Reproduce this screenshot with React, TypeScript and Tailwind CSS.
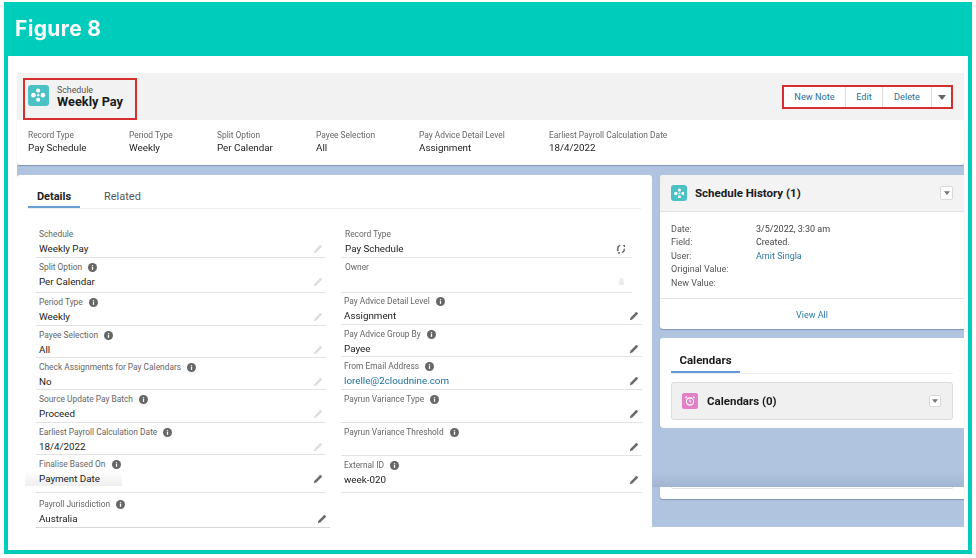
import React from "react";

const font = "font-['Roboto','Liberation_Sans',sans-serif]";

function Pencil({ tone = "dark" }: { tone?: "dark" | "light" }) {
  return (
    <svg viewBox="0 0 12 12" className="w-[10px] h-[10px] shrink-0">
      <path d="M1 11l.7-3L8.3 1.4a.8.8 0 0 1 1.1 0l1.2 1.2a.8.8 0 0 1 0 1.1L4 10.3z" fill={tone === "dark" ? "#6a6a6a" : "#dedede"} />
    </svg>
  );
}

function Info() {
  return (
    <svg viewBox="0 0 10 10" className="w-[9px] h-[9px] shrink-0">
      <circle cx="5" cy="5" r="5" fill="#666" />
      <rect x="4.3" y="4.2" width="1.4" height="3.4" fill="#fff" />
      <rect x="4.3" y="2.4" width="1.4" height="1.2" fill="#fff" />
    </svg>
  );
}

function Swap() {
  return (
    <svg viewBox="0 0 10 10" className="w-[10px] h-[10px] shrink-0" fill="none" stroke="#555" strokeWidth="1.3">
      <path d="M4.2 1.6C2.4 1.8 1.6 3.2 1.8 5.4" />
      <path d="M8.2 4.6c.2 2.2-.6 3.6-2.4 3.8" />
      <path d="M.4 5.6h2.8L1.8 7.6zM6.8.9l2.4.2-.6 2.4z" fill="#555" stroke="none" />
      <path d="M2 8.2h2v1.3H2zM6.4 1h1.4" stroke="none" fill="#555" />
    </svg>
  );
}

function Lock() {
  return (
    <svg viewBox="0 0 10 10" className="w-[9px] h-[9px] shrink-0">
      <path d="M3 5V3a2 2 0 0 1 4 0v2h1v4H2V5z" fill="#ececec" />
    </svg>
  );
}

function Flower({ className }: { className: string }) {
  return (
    <div className={`${className} rounded-[3px] bg-[#4bc1c5] flex items-center justify-center`}>
      <svg viewBox="0 0 12 12" className="w-[68%] h-[68%]" fill="#fff">
        <circle cx="6" cy="2.2" r="1.7" />
        <circle cx="6" cy="9.8" r="1.7" />
        <circle cx="2" cy="6" r="1.9" />
        <circle cx="10" cy="6" r="1.9" />
        <circle cx="6" cy="6" r="1" />
      </svg>
    </div>
  );
}

function Caret({ className }: { className: string }) {
  return (
    <div className={`${className} rounded-[2px] bg-white border border-[#d8d8d8] flex items-center justify-center`}>
      <svg viewBox="0 0 8 5" className="w-[6px] h-[4px]"><path d="M0 0h8L4 5z" fill="#777" /></svg>
    </div>
  );
}

type Row = {
  label: string;
  value?: string;
  info?: boolean;
  icon: "dark" | "light" | "swap" | "lock";
  h: string;
  border?: string;
  link?: boolean;
  shade?: boolean;
  indent?: boolean;
  top?: string;
};

function Field({ r }: { r: Row }) {
  return (
    <div className={`${r.h} ${r.border ?? "border-b border-[#e2e2e2]"} ${r.top ?? "pt-[2px]"} ${r.indent ? "pl-[4px] pr-[6px]" : "pl-[3px] pr-[3px]"} flex flex-col`}>
      <div className="h-[14px] flex items-center gap-[6px] text-[#666] text-[8.4px] leading-[14px]">
        <span>{r.label}</span>
        {r.info && <Info />}
      </div>
      <div className="h-[15px] flex items-center justify-between">
        <span
          className={`text-[9.8px] leading-[15px] ${r.link ? "text-[#1f6f9f]" : "text-[#222]"} ${r.shade ? "-ml-[14px] pl-[14px] w-[97px] bg-gradient-to-b from-white to-[#eeeeee]" : ""}`}
        >
          {r.value}
        </span>
        {r.icon === "swap" ? <Swap /> : r.icon === "lock" ? <Lock /> : <Pencil tone={r.icon} />}
      </div>
    </div>
  );
}

const leftRows: Row[] = [
  { label: "Schedule", value: "Weekly Pay", icon: "light", h: "h-[33px]" },
  { label: "Split Option", value: "Per Calendar", info: true, icon: "light", h: "h-[35px]" },
  { label: "Period Type", value: "Weekly", info: true, icon: "light", h: "h-[33px]" },
  { label: "Payee Selection", value: "All", info: true, icon: "light", h: "h-[32px]" },
  { label: "Check Assignments for Pay Calendars", value: "No", info: true, icon: "light", h: "h-[32px]" },
  { label: "Source Update Pay Batch", value: "Proceed", info: true, icon: "light", h: "h-[33px]" },
  { label: "Earliest Payroll Calculation Date", value: "18/4/2022", info: true, icon: "light", h: "h-[32px]" },
  { label: "Finalise Based On", value: "Payment Date", info: true, icon: "dark", h: "h-[38px]", shade: true },
  { label: "Payroll Jurisdiction", value: "Australia", info: true, icon: "dark", h: "h-[35px]", top: "pt-[4px]", border: "border-b border-[#d8d8d8] -mr-[4px]" },
];

const rightRows: Row[] = [
  { label: "Record Type", value: "Pay Schedule", icon: "swap", h: "h-[33px]", border: "border-b border-[#e8e8e8] mr-[10px]", indent: true },
  { label: "Owner", icon: "lock", h: "h-[35px]", border: "border-b border-[#e2e2e2] mr-[10px]", indent: true },
  { label: "Pay Advice Detail Level", value: "Assignment", info: true, icon: "dark", h: "h-[32px]", top: "pt-[1px]" },
  { label: "Pay Advice Group By", value: "Payee", info: true, icon: "dark", h: "h-[32px]" },
  { label: "From Email Address", value: "lorelle@2cloudnine.com", info: true, icon: "dark", h: "h-[33px]", link: true },
  { label: "Payrun Variance Type", info: true, icon: "dark", h: "h-[33px]" },
  { label: "Payrun Variance Threshold", info: true, icon: "dark", h: "h-[33px]" },
  { label: "External ID", value: "week-020", info: true, icon: "dark", h: "h-[37px]" },
];

const highlights = [
  ["Record Type", "Pay Schedule", "w-[101px]"],
  ["Period Type", "Weekly", "w-[88px]"],
  ["Split Option", "Per Calendar", "w-[99px]"],
  ["Payee Selection", "All", "w-[103px]"],
  ["Pay Advice Detail Level", "Assignment", "w-[130px]"],
  ["Earliest Payroll Calculation Date", "18/4/2022", "w-[150px]"],
];

const history = [
  ["Date:", "3/5/2022, 3:30 am"],
  ["Field:", "Created."],
  ["User:", "Amit Singla"],
  ["Original Value:", ""],
  ["New Value:", ""],
];

export default function App() {
  return (
    <div className={`${font} w-[976px] h-[558px] bg-white pt-[2px] pl-[4px] overflow-hidden`}>
      <div className="w-[968px] h-[552px] border-x-[4px] border-b-[4px] border-[#00ccbb] flex flex-col">
        <div className="h-[54px] -mx-[4px] bg-[#00ccbb] pl-[11px] flex items-center text-white font-['Inter',sans-serif] font-bold text-[21px] tracking-[0.35px] blur-[0.4px]">
          Figure 8
        </div>
        <div className="ml-[9px] mt-[17px] w-[947px] h-[454px] flex flex-col blur-[0.6px]">
          <div className="h-[47px] bg-[#f2f2f2] flex items-start justify-between pl-[6px] pr-[11px] shrink-0">
            <div className="mt-[5px] w-[114px] h-[42px] border-[2px] border-[#d42f2c] flex items-start pl-[3px] pt-[5px] gap-[8px]">
              <Flower className="w-[21px] h-[21px]" />
              <div className="flex flex-col">
                <span className="text-[8.8px] leading-[11px] text-[#555]">Schedule</span>
                <span className="text-[12.8px] leading-[12px] font-bold text-[#1a1a1a]">Weekly Pay</span>
              </div>
            </div>
            <div className="mt-[12px] w-[171px] h-[24px] border-[2px] border-[#d42f2c] bg-white flex text-[9.2px] text-[#2a6f9e]">
              <div className="w-[62px] flex items-center justify-center border-r border-[#dddddd]">New Note</div>
              <div className="w-[37px] flex items-center justify-center border-r border-[#dddddd]">Edit</div>
              <div className="w-[49px] flex items-center justify-center border-r border-[#dddddd]">Delete</div>
              <div className="flex-1 flex items-center justify-center">
                <svg viewBox="0 0 8 5" className="w-[8px] h-[5px]"><path d="M0 0h8L4 5z" fill="#666" /></svg>
              </div>
            </div>
          </div>
          <div className="h-[45px] bg-white flex pl-[11px] pt-[9px] rounded-b-[3px] shrink-0 shadow-[0_1px_1px_rgba(80,100,140,0.5)] relative">
            {highlights.map(([l, v, w]) => (
              <div key={l} className={`${w} flex flex-col`}>
                <span className="text-[8.4px] leading-[12px] text-[#666] whitespace-nowrap">{l}</span>
                <span className="text-[9.8px] leading-[14px] text-[#222]">{v}</span>
              </div>
            ))}
          </div>
          <div className="flex-1 min-h-0 bg-[#b0c4df] pt-[10px] flex">
            <div className="w-[635px] bg-white rounded-t-[3px] flex flex-col">
              <div className="h-[34px] mx-[11px] border-b border-[#eeeeee] flex items-end text-[11px] shrink-0">
                <div className="w-[52px] h-[34px] flex items-center justify-center font-bold text-[#222] border-b-[2px] border-[#6a9fd4] pt-[14px]">Details</div>
                <div className="ml-[24px] h-[34px] flex items-center text-[#555] pt-[12px]">Related</div>
              </div>
              <div className="flex pl-[19px] pt-[16px]">
                <div className="w-[290px] flex flex-col shrink-0">
                  {leftRows.map((r) => <Field key={r.label} r={r} />)}
                </div>
                <div className="w-[301px] ml-[15px] flex flex-col shrink-0">
                  {rightRows.map((r) => <Field key={r.label} r={r} />)}
                </div>
              </div>
            </div>
            <div className="ml-[8px] w-[304px] flex flex-col">
              <div className="h-[154px] bg-white rounded-l-[3px] flex flex-col shadow-[0_1px_1px_rgba(80,100,140,0.5)] shrink-0">
                <div className="h-[37px] bg-[#f3f3f3] border-b border-[#e2e2e2] flex items-center px-[11px] shrink-0 rounded-tl-[3px]">
                  <Flower className="w-[16px] h-[16px]" />
                  <span className="ml-[8px] pt-[2px] flex-1 text-[11.5px] font-bold text-[#1a1a1a]">Schedule History (1)</span>
                  <Caret className="w-[13px] h-[14px]" />
                </div>
                <div className="h-[87px] border-b border-[#e2e2e2] pl-[11px] pt-[11px] shrink-0">
                  {history.map(([k, v]) => (
                    <div key={k} className="h-[13.4px] flex text-[9px] leading-[13.4px] text-[#555]">
                      <span className="w-[85px]">{k}</span>
                      <span className={k === "User:" ? "text-[#2d7aa8]" : "text-[#444]"}>{v}</span>
                    </div>
                  ))}
                </div>
                <div className="flex-1 pt-[4px] flex items-center justify-center text-[9px] text-[#2d7aa8]">View All</div>
              </div>
              <div className="mt-[9px] h-[90px] bg-white rounded-l-[3px] px-[11px] flex flex-col shadow-[0_1px_1px_rgba(80,100,140,0.5)] shrink-0">
                <div className="h-[36px] border-b border-[#eeeeee] flex items-end shrink-0">
                  <div className="w-[69px] h-[36px] pt-[14px] flex items-center justify-center text-[11.5px] font-bold text-[#1a1a1a] border-b-[2px] border-[#5f9ad6]">Calendars</div>
                </div>
                <div className="mt-[8px] h-[38px] rounded-[3px] bg-[#f0f0f0] border border-[#dcdcdc] flex items-center pl-[10px] pr-[11px]">
                  <div className="w-[16px] h-[16px] rounded-[2px] bg-[#e37fc5] flex items-center justify-center">
                    <svg viewBox="0 0 12 12" className="w-[12px] h-[12px]" fill="none" stroke="#fff" strokeWidth="1.1">
                      <circle cx="6" cy="6.5" r="3.6" />
                      <path d="M6 4.6v2l1.2.8M1.5 3L3 1.5M10.5 3L9 1.5" />
                    </svg>
                  </div>
                  <span className="ml-[9px] pt-[1px] flex-1 text-[11.5px] font-bold text-[#1a1a1a]">Calendars (0)</span>
                  <Caret className="w-[12px] h-[12px]" />
                </div>
              </div>
              <div className="-ml-[8px] h-[59px] shrink-0 bg-gradient-to-b from-[#b0c4df] via-[#b0c4df] via-75% to-[#a2b5d1]" />
              <div className="h-[12px] bg-white rounded-bl-[3px] px-[11px] shrink-0 shadow-[0_1px_1px_rgba(80,100,140,0.5)]">
                <div className="h-[2px] border-x border-b border-[#e2e2e2] rounded-b-[3px]" />
              </div>
            </div>
          </div>
        </div>
      </div>
    </div>
  );
}
